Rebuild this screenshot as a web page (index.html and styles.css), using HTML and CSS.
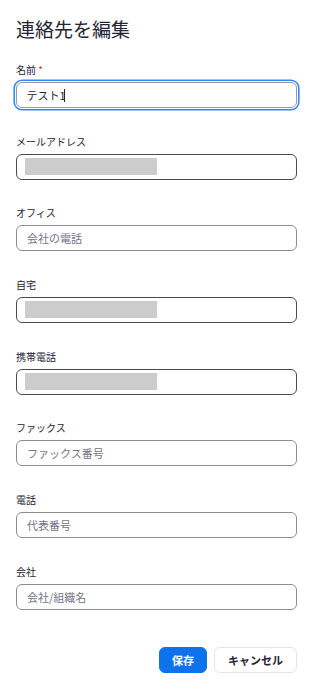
FILE: index.html
```html
<!DOCTYPE html>
<html lang="ja">
<head>
<meta charset="utf-8">
<title>連絡先を編集</title>
<link rel="stylesheet" href="styles.css">
</head>
<body>
<form class="dialog">
  <h1 class="title">連絡先を編集</h1>

  <div class="field">
    <label class="label">名前 <span class="req">*</span></label>
    <div class="input focused">テスト1<span class="caret"></span></div>
  </div>

  <div class="field">
    <label class="label">メールアドレス</label>
    <div class="input filled"><span class="mask"></span></div>
  </div>

  <div class="field">
    <label class="label">オフィス</label>
    <input class="input" type="text" placeholder="会社の電話">
  </div>

  <div class="field">
    <label class="label">自宅</label>
    <div class="input filled"><span class="mask"></span></div>
  </div>

  <div class="field">
    <label class="label">携帯電話</label>
    <div class="input filled"><span class="mask"></span></div>
  </div>

  <div class="field">
    <label class="label">ファックス</label>
    <input class="input" type="text" placeholder="ファックス番号">
  </div>

  <div class="field">
    <label class="label">電話</label>
    <input class="input" type="text" placeholder="代表番号">
  </div>

  <div class="field">
    <label class="label">会社</label>
    <input class="input" type="text" placeholder="会社/組織名">
  </div>

  <div class="actions">
    <button type="button" class="btn primary">保存</button>
    <button type="button" class="btn secondary">キャンセル</button>
  </div>
</form>
</body>
</html>
```

FILE: styles.css
```css
* {
  box-sizing: border-box;
}

body {
  margin: 0;
  background: #ffffff;
  font-family: "Noto Sans CJK JP", "Noto Sans", sans-serif;
  color: #232333;
}

.dialog {
  display: flex;
  flex-direction: column;
  width: 281px;
  margin-left: 16px;
  padding-top: 15px;
}

.title {
  margin: 0 0 19px;
  font-size: 19px;
  line-height: 28px;
  font-weight: 400;
  color: #232333;
}

.field {
  display: flex;
  flex-direction: column;
  gap: 4px;
  margin-bottom: 25.67px;
}

.label {
  font-size: 10px;
  line-height: 16px;
  color: #232333;
}

.req {
  color: #e02828;
}

.input {
  display: flex;
  align-items: center;
  width: 100%;
  height: 26px;
  margin: 0;
  padding: 0 10px;
  border: 1px solid #8c8c94;
  border-radius: 6px;
  background: #ffffff;
  font-family: "Noto Sans CJK JP", "Noto Sans", sans-serif;
  font-size: 11px;
  color: #232333;
  outline: none;
}

.input::placeholder {
  color: #747487;
}

.input.filled {
  border-color: #4a4a55;
  padding: 0 8px;
}

.input.focused {
  border: 1.5px solid #9a9a9a;
  box-shadow: 0 0 0 1px #ffffff, 0 0 0 2.6px #2d8cff;
  padding: 0 9.5px;
}

.caret {
  display: inline-block;
  width: 1.5px;
  height: 13px;
  margin-left: -2px;
  background: #232333;
}

.mask {
  display: block;
  width: 132px;
  height: 17px;
  background: #cccccc;
}

.actions {
  display: flex;
  justify-content: flex-end;
  gap: 7px;
  margin-top: 12px;
}

.btn {
  height: 26px;
  border-radius: 6px;
  font-family: "Noto Sans CJK JP", "Noto Sans", sans-serif;
  font-size: 11px;
  font-weight: 700;
  line-height: 1;
  cursor: pointer;
}

.primary {
  padding: 0 12px;
  border: 1px solid #0e72ed;
  background: #0e72ed;
  color: #ffffff;
}

.secondary {
  padding: 0 13px;
  border: 1px solid #e4e4ea;
  background: #ffffff;
  color: #232333;
}
```
